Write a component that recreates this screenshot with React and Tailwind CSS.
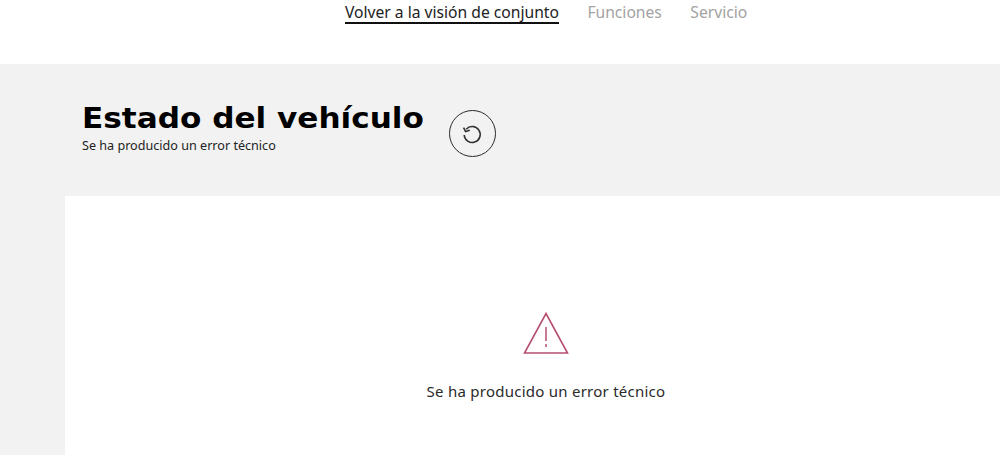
export default function App() {
  return (
    <div className="w-[1000px] h-[455px] overflow-hidden bg-[#f2f2f2] font-['Noto_Sans',sans-serif] text-[#1a1a1a]">
      <header className="h-16 bg-white flex items-start pl-[345px] gap-[28.5px] text-[15.65px] leading-6">
        <a className="h-[22px] box-content border-b-2 border-[#111] text-[#222]">Volver a la visión de conjunto</a>
        <a className="text-[#a3a3a3]">Funciones</a>
        <a className="text-[#a3a3a3]">Servicio</a>
      </header>
      <section className="h-[132px] flex items-start pl-[82px] pt-[37px]">
        <div>
          <h1 className="font-['DejaVu_Sans',sans-serif] font-bold text-[29px] leading-[34px] origin-left scale-x-[1.073] text-black">Estado del vehículo</h1>
          <p className="mt-[3px] text-[12.6px] leading-4 text-[#222]">Se ha producido un error técnico</p>
        </div>
        <button className="ml-[48px] mt-[9px] w-[47px] h-[47px] rounded-full border-[1.5px] border-[#2a2a2a] flex items-center justify-center text-[#333]">
          <svg width="22" height="22" viewBox="0 0 22 22" fill="none" stroke="currentColor" strokeWidth="1.6">
            <path d="M5.2 6.2A8 8 0 1 1 3.2 12" />
            <path d="M2.6 4.6 L4.6 8.6 L8.8 7.2" />
          </svg>
        </button>
      </section>
      <main className="ml-[65px] h-[259px] bg-white flex flex-col items-center pl-[27px]">
        <svg className="mt-[116px]" width="46" height="44" viewBox="0 0 46 44" fill="none" stroke="#b5506f" strokeWidth="1.6">
          <path d="M23 1.5 L44.5 41 H1.5 Z" />
          <path d="M23 15 V29" strokeWidth="1.5" />
          <path d="M23 32 V35" strokeWidth="1.5" />
        </svg>
        <p className="mt-[25px] text-[15px] leading-5 tracking-[0.25px] text-[#2a2a2a]">Se ha producido un error técnico</p>
      </main>
    </div>
  );
}
